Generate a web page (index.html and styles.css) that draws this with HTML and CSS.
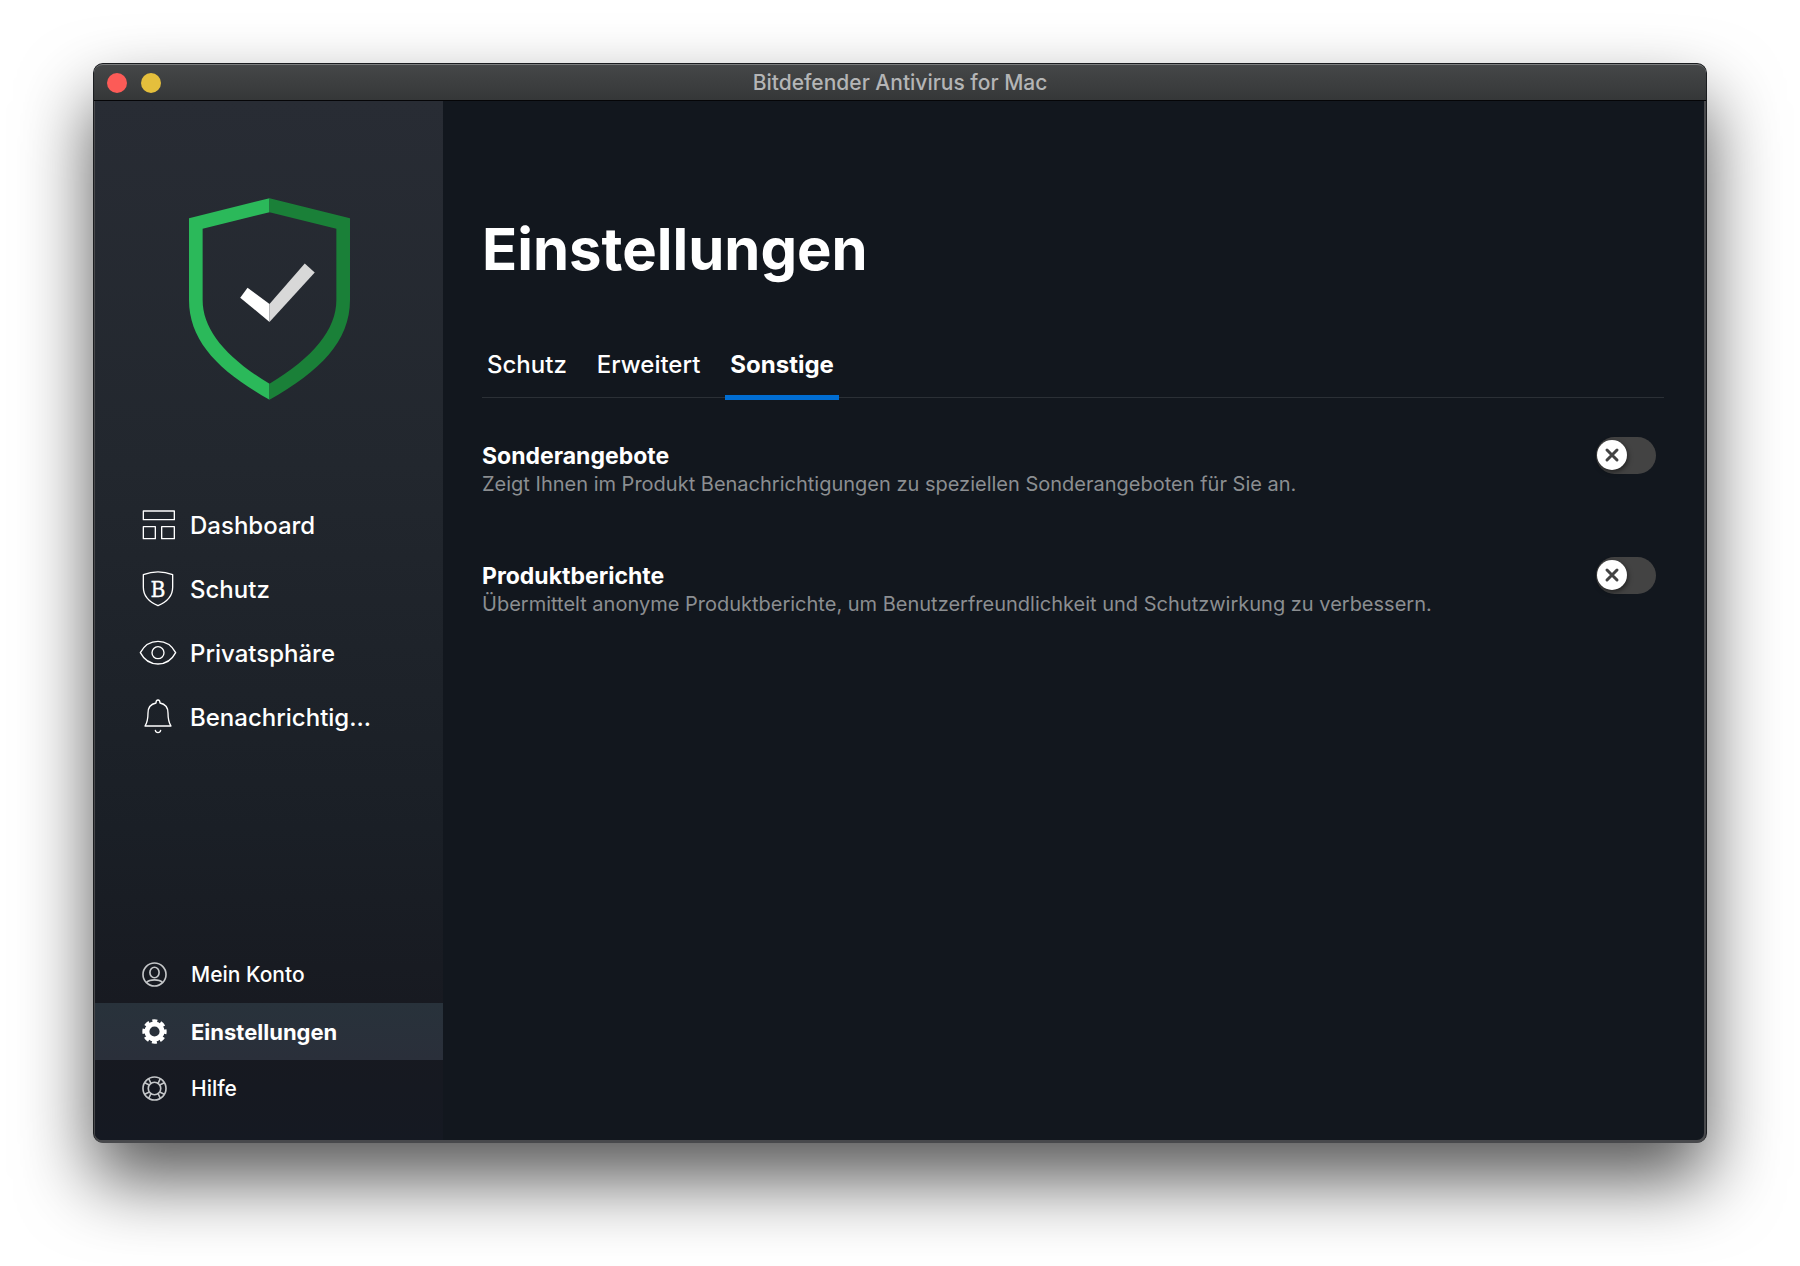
FILE: index.html
```html
<!DOCTYPE html>
<html lang="de">
<head>
  <meta charset="UTF-8">
  <meta name="viewport" content="width=device-width, initial-scale=1.0">
  <title>Bitdefender Antivirus for Mac</title>
  <link rel="stylesheet" href="styles.css">
</head>
<body>

  <div class="window">
    <header class="titlebar">
      <div class="lights">
        <button class="light close" aria-label="Schließen"></button>
        <button class="light minimize" aria-label="Minimieren"></button>
      </div>
      <span class="window-title">Bitdefender Antivirus for Mac</span>
    </header>

    <div class="content">
      <aside class="sidebar">
        <svg class="shield" viewBox="0 0 484 606" aria-hidden="true">
          <path fill="#2bb95a" d="M242 0 L0 60 V306 C0 430 90 520 242 606 V558 C110 478 41 395 41 306 V92 L242 42 Z"/>
          <path fill="#1a8038" d="M242 0 L484 60 V306 C484 430 394 520 242 606 V558 C374 478 443 395 443 306 V92 L242 42 Z"/>
          <path fill="#ffffff" d="M154 299 L176 269 L242 318 V372 Z"/>
          <path fill="#d8d8d8" d="M242 318 L348 196 L378 223 L242 372 Z"/>
        </svg>

        <nav class="menu">
          <a class="menu-item" href="#dashboard">
            <svg class="icon" viewBox="0 0 108 108" aria-hidden="true">
              <rect x="10" y="12" width="93" height="26"/>
              <rect x="10" y="59" width="36" height="36"/>
              <rect x="65" y="59" width="38" height="36"/>
            </svg>
            Dashboard
          </a>
          <a class="menu-item" href="#schutz">
            <svg class="icon" viewBox="0 0 108 108" aria-hidden="true">
              <path d="M10 11 Q54 -6 98 11 V49 C98 76 78 94 54 104 C30 94 10 76 10 49 Z"/>
              <text x="54" y="77" text-anchor="middle">B</text>
            </svg>
            Schutz
          </a>
          <a class="menu-item" href="#privat">
            <svg class="icon" viewBox="0 0 108 108" aria-hidden="true">
              <path d="M1 53 C12 32 31 19 54 19 C77 19 96 32 107 53 C96 74 77 87 54 87 C31 87 12 74 1 53 Z"/>
              <circle cx="54" cy="53" r="18"/>
            </svg>
            Privatsphäre
          </a>
          <a class="menu-item" href="#meldungen">
            <svg class="icon" viewBox="0 0 108 108" aria-hidden="true">
              <path d="M48 12 C48 0 60 0 60 12 C75 15 84 26 84 42 C84 62 87 72 93 81 H15 C21 72 24 62 24 42 C24 26 33 15 48 12"/>
              <path d="M46 94 C48 103 60 103 62 94"/>
            </svg>
            Benachrichtig...
          </a>
        </nav>

        <nav class="footer-menu">
          <a class="footer-item" href="#konto">
            <svg class="small-icon" viewBox="0 0 76 76" aria-hidden="true">
              <circle cx="38" cy="38" r="35"/>
              <ellipse cx="38" cy="32" rx="14" ry="16"/>
              <path d="M14 62 C24 52 52 52 62 62"/>
            </svg>
            Mein Konto
          </a>
          <a class="footer-item active" href="#einstellungen">
            <svg class="small-icon gear" viewBox="0 0 76 76" aria-hidden="true">
              <circle cx="38" cy="38" r="23" stroke-width="15"/>
              <circle cx="38" cy="38" r="32" stroke-width="10" stroke-dasharray="15 10.13" stroke-dashoffset="7.5"/>
            </svg>
            Einstellungen
          </a>
          <a class="footer-item" href="#hilfe">
            <svg class="small-icon" viewBox="0 0 76 76" aria-hidden="true">
              <circle cx="38" cy="38" r="35"/>
              <circle cx="38" cy="38" r="19"/>
              <path d="M20 7 L27 22 M7 20 L22 27 M56 7 L49 22 M69 20 L54 27 M20 69 L27 54 M7 56 L22 49 M56 69 L49 54 M69 56 L54 49"/>
            </svg>
            Hilfe
          </a>
        </nav>
      </aside>

      <main class="main">
        <h1>Einstellungen</h1>

        <div class="tabs" role="tablist">
          <button class="tab" role="tab" aria-selected="false">Schutz</button>
          <button class="tab" role="tab" aria-selected="false">Erweitert</button>
          <button class="tab active" role="tab" aria-selected="true">Sonstige</button>
        </div>

        <div class="option">
          <div class="option-text">
            <label for="angebote">Sonderangebote</label>
            <p>Zeigt Ihnen im Produkt Benachrichtigungen zu speziellen Sonderangeboten für Sie an.</p>
          </div>
          <div class="switch">
            <input type="checkbox" id="angebote">
            <span class="knob">
              <svg viewBox="0 0 30 30" aria-hidden="true"><path d="M10 10 L20 20 M20 10 L10 20"/></svg>
            </span>
          </div>
        </div>

        <div class="option">
          <div class="option-text">
            <label for="berichte">Produktberichte</label>
            <p>Übermittelt anonyme Produktberichte, um Benutzerfreundlichkeit und Schutzwirkung zu verbessern.</p>
          </div>
          <div class="switch">
            <input type="checkbox" id="berichte">
            <span class="knob">
              <svg viewBox="0 0 30 30" aria-hidden="true"><path d="M10 10 L20 20 M20 10 L10 20"/></svg>
            </span>
          </div>
        </div>
      </main>
    </div>
  </div>

</body>
</html>
```
FILE: styles.css
```css
* {
  box-sizing: border-box;
}

body {
  margin: 0;
  min-height: 100vh;
  padding: 63px 93px 123px;
  display: flex;
  background: #fff;
  color: #fff;
  font-family: Inter, "Liberation Sans", sans-serif;
}

button {
  font: inherit;
  color: inherit;
  border: none;
  background: none;
  padding: 0;
}

a {
  color: inherit;
  text-decoration: none;
}

.window {
  flex: 1;
  display: flex;
  flex-direction: column;
  padding: 0 2px 3px 1px;
  border: 1px solid #1b1d20;
  border-bottom: none;
  border-radius: 10px;
  background: #48494c;
  box-shadow: 0 37px 72px rgba(0, 0, 0, 0.66);
}

/* title bar */
.titlebar {
  height: 37px;
  margin: 0 -2px 0 -1px;
  padding: 0 13px;
  display: grid;
  grid-template-columns: 1fr auto 1fr;
  align-items: center;
  border-top: 1px solid #7b7d7e;
  border-bottom: 1px solid #050507;
  border-radius: 9px 9px 0 0;
  background: linear-gradient(#454748, #353738);
}

.lights {
  display: flex;
  gap: 14px;
}

.light {
  width: 20px;
  height: 20px;
  border-radius: 50%;
}

.close {
  background: #fc5b57;
}

.minimize {
  background: #e5bf3c;
}

.window-title {
  font-size: 21px;
  line-height: 26px;
  font-weight: 500;
  color: #b4b5b6;
}

.content {
  flex: 1;
  display: flex;
  border-radius: 0 0 7px 7px;
  background: #12171e;
  overflow: hidden;
}

/* sidebar */
.sidebar {
  width: 348px;
  flex-shrink: 0;
  display: flex;
  flex-direction: column;
  padding: 97px 0 23px;
  background: linear-gradient(#282c34, #22272e 35%, #1a1f26 70%, #171920 90%, #151922);
}

.shield {
  width: 161px;
  height: 202px;
  align-self: center;
}

.menu {
  margin-top: 93px;
}

.menu-item {
  height: 64px;
  padding-left: 45px;
  display: flex;
  align-items: center;
  gap: 14px;
  font-size: 24px;
  font-weight: 500;
}

.icon {
  width: 36px;
  height: 36px;
  overflow: visible;
  fill: none;
  stroke: #fff;
  stroke-width: 4;
  stroke-linejoin: round;
  stroke-linecap: round;
}

.icon text {
  font-family: "DejaVu Serif Condensed", "DejaVu Serif", serif;
  font-size: 68px;
  font-weight: 400;
  fill: #fff;
  stroke-width: 1;
}

.footer-menu {
  margin-top: auto;
}

.footer-item {
  height: 57px;
  padding-left: 47px;
  display: flex;
  align-items: center;
  gap: 24px;
  font-size: 21px;
  font-weight: 500;
}

.footer-item.active {
  font-size: 22px;
  font-weight: 700;
  background: linear-gradient(#28323b, #2a2f3a);
}

.small-icon {
  width: 25px;
  height: 25px;
  fill: none;
  stroke: #c4c6c8;
  stroke-width: 5;
}

.gear {
  stroke: #fff;
  stroke-width: initial;
}

/* settings page */
.main {
  flex: 1;
  padding: 111px 40px 0 39px;
}

h1 {
  margin: 0;
  font-size: 58px;
  line-height: 74px;
  font-weight: 700;
}

.tabs {
  margin-top: 57px;
  height: 55px;
  display: flex;
  gap: 20px;
  border-bottom: 1px solid #2b3036;
}

.tab {
  height: 57px;
  padding: 0 5px 10px;
  font-size: 24px;
  font-weight: 500;
  border-bottom: 5px solid transparent;
}

.tab.active {
  font-weight: 700;
  border-color: #006dd2;
}

.option {
  height: 120px;
  padding: 39px 8px 0 0;
  display: flex;
  justify-content: space-between;
}

.option-text {
  padding-top: 4px;
}

.option-text label {
  display: block;
  font-size: 23px;
  line-height: 30px;
  font-weight: 700;
}

.option-text p {
  margin: 0;
  font-size: 20px;
  line-height: 26px;
  color: #8b8e91;
}

.switch {
  position: relative;
  width: 60px;
  height: 37px;
}

.switch input {
  appearance: none;
  width: 60px;
  height: 37px;
  margin: 0;
  border-radius: 19px;
  background: #434343;
}

.knob {
  position: absolute;
  top: 3px;
  left: 1px;
  width: 30px;
  height: 30px;
  border-radius: 50%;
  background: #fff;
  box-shadow: 1px 2px 5px rgba(0, 0, 0, 0.5);
  pointer-events: none;
}

.knob svg {
  display: block;
  fill: none;
  stroke: #434343;
  stroke-width: 3;
  stroke-linecap: round;
}

.switch input:checked + .knob {
  left: 29px;
}
```
